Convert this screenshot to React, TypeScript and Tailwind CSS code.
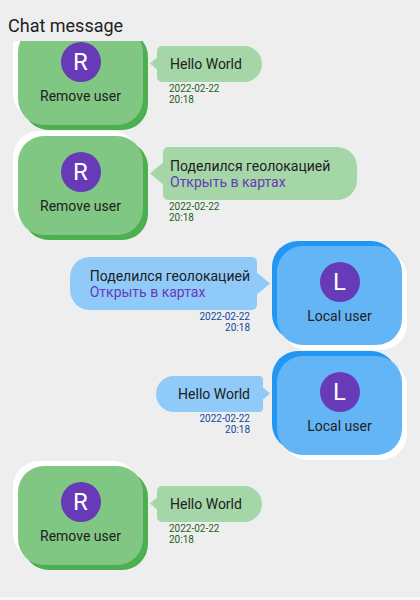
import React from "react";

type Message = {
  id: number;
  local: boolean;
  kind: "text" | "geo";
  text: string;
  date: string;
  time: string;
};

const messages: Message[] = [
  { id: 1, local: false, kind: "text", text: "Hello World", date: "2022-02-22", time: "20:18" },
  { id: 2, local: false, kind: "geo", text: "Поделился геолокацией", date: "2022-02-22", time: "20:18" },
  { id: 3, local: true, kind: "geo", text: "Поделился геолокацией", date: "2022-02-22", time: "20:18" },
  { id: 4, local: true, kind: "text", text: "Hello World", date: "2022-02-22", time: "20:18" },
  { id: 5, local: false, kind: "text", text: "Hello World", date: "2022-02-22", time: "20:18" },
];

const UserCard = ({ local }: { local: boolean }) => (
  <div
    className={`flex-shrink-0 w-[125px] h-[99px] rounded-[26px] flex flex-col items-center justify-center gap-[4px] pb-[2px] ${
      local
        ? "bg-[#64b5f6] shadow-[-5px_-5px_0_#2196f3,5px_5px_0_#ffffff]"
        : "bg-[#81c784] shadow-[-5px_-5px_0_#ffffff,5px_5px_0_#4caf50]"
    }`}
  >
    <div className="w-[40px] h-[40px] rounded-full bg-[#673ab7] flex items-center justify-center text-white text-[24px] leading-none">
      {local ? "L" : "R"}
    </div>
    <div className="text-[14px] leading-[20px] text-[#212121]">
      {local ? "Local user" : "Remove user"}
    </div>
  </div>
);

const Bubble = ({ message }: { message: Message }) => {
  const { local, kind } = message;
  const geo = kind === "geo";

  const tail = geo ? "w-[13px] h-[22px]" : "w-[7px] h-[12px]";
  const side = local
    ? geo
      ? "mr-[13px] pl-[20px] pr-[7px] rounded-l-[20px] rounded-r-[5px] bg-[#90caf9]"
      : "mr-[7px] pl-[22px] pr-[13px] rounded-l-[18px] rounded-r-[4px] bg-[#90caf9]"
    : geo
    ? "ml-[13px] pl-[7px] pr-[27px] rounded-l-[5px] rounded-r-[20px] bg-[#a5d6a7]"
    : "ml-[7px] pl-[13px] pr-[20px] rounded-l-[5px] rounded-r-[18px] bg-[#a5d6a7]";

  return (
    <div className={`flex flex-col ${local ? "items-end" : "items-start"}`}>
      <div
        className={`relative text-[14px] text-[#212121] ${
          geo ? "pt-[11px] pb-[10px] leading-[16px]" : "py-[8px] leading-[20px]"
        } ${side}`}
      >
        <div>{message.text}</div>
        {geo && <div className="text-[#673ab7]">Открыть в картах</div>}
        <div
          className={`absolute top-1/2 -translate-y-1/2 ${tail} ${
            local
              ? "left-full bg-[#90caf9] [clip-path:polygon(0_0,100%_50%,0_100%)]"
              : "right-full bg-[#a5d6a7] [clip-path:polygon(100%_0,0_50%,100%_100%)]"
          }`}
        ></div>
      </div>
      <div
        className={`mt-[1px] text-[10px] leading-[11px] ${
          local
            ? "text-right pr-[20px] text-[#0d47a1]"
            : "text-left pl-[19px] text-[#1b5e20]"
        }`}
      >
        <div>{message.date}</div>
        <div>{message.time}</div>
      </div>
    </div>
  );
};

const Row = ({ message }: { message: Message }) => (
  <div
    className={`h-[100px] flex items-center gap-[7px] ${
      message.local ? "justify-end pr-[18px]" : "justify-start pl-[18px]"
    }`}
  >
    {message.local ? (
      <>
        <Bubble message={message} />
        <UserCard local />
      </>
    ) : (
      <>
        <UserCard local={false} />
        <Bubble message={message} />
      </>
    )}
  </div>
);

export default function App() {
  return (
    <div className="w-[420px] h-[600px] bg-[#f7f7f7] font-['Roboto',sans-serif]">
      <div className="h-[597px] bg-[#eeeeee] flex flex-col">
        <div className="pt-[15px] pb-[4px] pl-[8px] text-[18px] leading-[22px] text-[#212121]">
          Chat message
        </div>
        <div className="flex-1 overflow-hidden">
          <div className="-mt-[16px] flex flex-col gap-[10px]">
            {messages.map((m) => (
              <Row key={m.id} message={m} />
            ))}
          </div>
        </div>
      </div>
    </div>
  );
}
